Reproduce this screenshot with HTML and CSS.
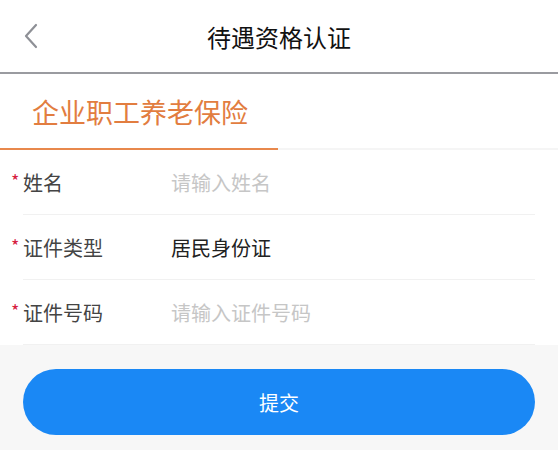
FILE: index.html
```html
<!DOCTYPE html>
<html lang="zh-CN">
<head>
    <meta charset="UTF-8">
    <meta name="viewport" content="width=device-width, initial-scale=1.0">
    <title>待遇资格认证</title>
    <link rel="stylesheet" href="styles.css">
</head>
<body>
    <header class="nav-bar">
        <a class="back" href="#" aria-label="返回">
            <svg width="16" height="26" viewBox="0 0 16 26">
                <path d="M13 2 L3 13 L13 24" fill="none" stroke="#8e9096" stroke-width="2.2" stroke-linecap="round" stroke-linejoin="round"/>
            </svg>
        </a>
        <h1>待遇资格认证</h1>
        <span></span>
    </header>

    <div class="tabs">
        <div class="tab active">企业职工养老保险</div>
    </div>

    <form class="form">
        <div class="form-row">
            <label for="name"><span class="required">*</span>姓名</label>
            <input type="text" id="name" placeholder="请输入姓名">
        </div>
        <div class="form-row">
            <label><span class="required">*</span>证件类型</label>
            <div class="value">居民身份证</div>
        </div>
        <div class="form-row">
            <label for="idno"><span class="required">*</span>证件号码</label>
            <input type="text" id="idno" placeholder="请输入证件号码">
        </div>
    </form>

    <div class="footer">
        <button type="button" class="submit">提交</button>
    </div>
</body>
</html>
```

FILE: styles.css
```css
body {
    margin: 0;
    font-family: "Noto Sans CJK SC", "Noto Sans", sans-serif;
    background-color: #f7f7f7;
    color: #333;
}
.nav-bar {
    height: 72px;
    display: grid;
    grid-template-columns: 1fr auto 1fr;
    align-items: center;
    background: #fff;
    border-bottom: 2px solid #9a9ba0;
    box-sizing: content-box;
}
.back {
    display: flex;
    padding-left: 23px;
}
.nav-bar h1 {
    margin: 0;
    font-size: 24px;
    font-weight: 400;
    color: #111;
}
.tabs {
    height: 74px;
    background: #fff;
    border-bottom: 2px solid #f5f5f5;
    display: flex;
}
.tab {
    width: 278px;
    box-sizing: border-box;
    padding-left: 32px;
    display: flex;
    align-items: center;
    font-size: 27px;
    color: #e27d40;
}
.tab.active {
    border-bottom: 2px solid #e8884c;
    margin-bottom: -2px;
}
.form {
    background: #fff;
    padding: 0 23px;
}
.form-row {
    height: 64px;
    display: flex;
    align-items: center;
    border-bottom: 1px solid #f1f1f1;
    font-size: 20px;
}
.form-row label {
    width: 148px;
    flex-shrink: 0;
    color: #444;
    margin-left: -12px;
    padding-right: 12px;
    box-sizing: border-box;
    width: 160px;
    display: flex;
    align-items: center;
}
.required {
    color: #d6203f;
    font-size: 18px;
    width: 12px;
    margin-top: -4px;
}
.form-row input {
    flex: 1;
    border: none;
    outline: none;
    padding: 0;
    font: inherit;
    font-size: 20px;
    color: #333;
    background: transparent;
}
.form-row input::placeholder {
    color: #c6c6c6;
}
.value {
    color: #222;
}
.footer {
    padding: 24px 23px;
}
.submit {
    width: 100%;
    height: 66px;
    border: none;
    border-radius: 33px;
    background-color: #1a88f5;
    color: #fff;
    font-family: inherit;
    font-size: 20px;
    cursor: pointer;
}
```
